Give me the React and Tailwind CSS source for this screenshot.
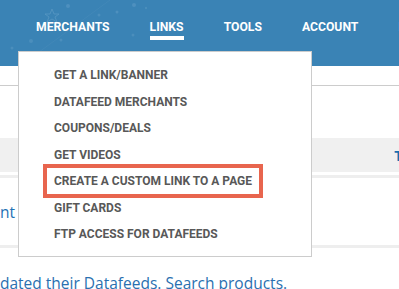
const navItems = ['MERCHANTS', 'LINKS', 'TOOLS', 'ACCOUNT', 'FAQ'];

const menuItems = [
  'GET A LINK/BANNER',
  'DATAFEED MERCHANTS',
  'COUPONS/DEALS',
  'GET VIDEOS',
  'CREATE A CUSTOM LINK TO A PAGE',
  'GIFT CARDS',
  'FTP ACCESS FOR DATAFEEDS',
];

function HeaderDecor() {
  // faint stars and dots in the banner background
  return (
    <svg className="absolute inset-0 h-full w-full" viewBox="0 0 399 66" fill="none">
      <path d="M52 9 l2 5 5 0 -4 3 2 5 -5 -3 -5 3 2 -5 -4 -3 5 0z" stroke="#5b9ac4" strokeWidth="1" opacity="0.7" />
      <circle cx="68" cy="6" r="2" fill="#5b9ac4" opacity="0.6" />
      <circle cx="134" cy="5" r="2" fill="#5b9ac4" opacity="0.6" />
      <circle cx="117" cy="12" r="1.5" fill="#5b9ac4" opacity="0.6" />
      <circle cx="99" cy="15" r="1.5" fill="#5b9ac4" opacity="0.5" />
      <circle cx="31" cy="41" r="2" fill="#5b9ac4" opacity="0.5" />
      <circle cx="61" cy="40" r="1.5" fill="#5b9ac4" opacity="0.5" />
      <circle cx="133" cy="35" r="1.5" fill="#5b9ac4" opacity="0.5" />
      <circle cx="12" cy="48" r="1.5" fill="#5b9ac4" opacity="0.5" />
      <circle cx="146" cy="8" r="1.2" fill="#5b9ac4" opacity="0.5" />
      <path d="M20 66 L110 0" stroke="#4a8fbe" strokeWidth="1" opacity="0.4" />
    </svg>
  );
}

export default function App() {
  return (
    <div className="relative h-[289px] w-[399px] overflow-hidden bg-white" style={{ fontFamily: '"Open Sans", sans-serif' }}>
      {/* top banner with main nav */}
      <header className="relative h-[66px] bg-[#3a83b5]">
        <HeaderDecor />
        <nav className="relative flex gap-10 pl-9 pt-[19px] whitespace-nowrap font-['Roboto',sans-serif]">
          {navItems.map((item) => (
            <div key={item} className="flex flex-col">
              <span className="text-[12.2px] font-bold leading-[17px] text-white">{item}</span>
              {item === 'LINKS' && <span className="h-[4px] w-full bg-white" />}
            </div>
          ))}
        </nav>
      </header>

      {/* page content behind the dropdown */}
      <div className="h-[20px] border-b border-[#cccccc]" />
      <div className="h-[52px]" />
      <div className="flex h-[34px] items-center justify-end bg-[#f0f0f0] pr-0">
        <span className="translate-x-[4px] text-[15px] font-bold text-[#1a6fb0]">T</span>
      </div>
      <div className="mt-[3px] h-[70px] border-t-[3px] border-[#eeeeee] pt-[22px]">
        <span className="text-[15.5px] text-[#1f72b5]">nt ...</span>
      </div>
      <div className="border-t-[3px] border-[#eeeeee] pt-[25px]">
        <p className="whitespace-nowrap text-[15.5px] leading-[20px] text-[#2a70b0]">
          dated their Datafeeds. <span>Search products.</span>
        </p>
      </div>

      {/* LINKS dropdown */}
      <div className="absolute left-[18px] top-[51px] h-[206px] w-[294px] border border-[#cccccc] bg-white pt-[10px] font-['Roboto',sans-serif]">
        {menuItems.map((item, i) => (
          <div key={item} className="relative flex h-[26.5px] items-center pl-[35px]">
            {i === 4 && (
              <span className="absolute left-[24px] top-[-4.5px] h-[34px] w-[220px] border-4 border-[#e8654e]" />
            )}
            <span className="relative whitespace-nowrap text-[12px] font-bold text-[#585858]">{item}</span>
          </div>
        ))}
      </div>
    </div>
  );
}
